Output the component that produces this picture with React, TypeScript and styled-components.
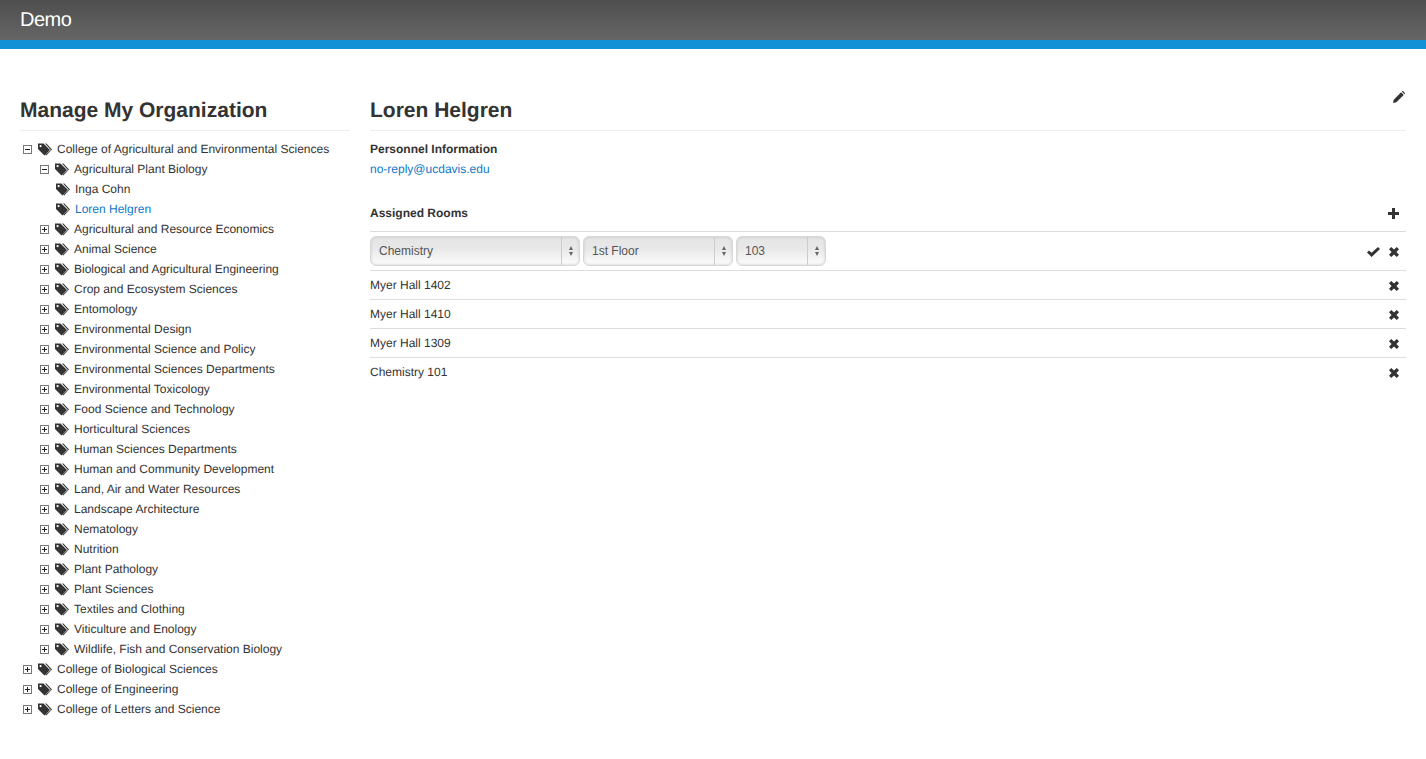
import { createGlobalStyle, styled } from 'styled-components';

const GlobalStyle = createGlobalStyle`
  html, body { margin: 0; padding: 0; background: #fff; }
  body {
    font-family: "Liberation Sans", Arial, sans-serif;
    font-size: 12px;
    color: #333;
    text-rendering: geometricPrecision;
  }
`;

const Header = styled.header`
  height: 40px;
  background: linear-gradient(to bottom, #4e4e4e, #666);
  border-bottom: 9px solid #1291d6;
  display: flex;
  align-items: center;
  padding-left: 20px;
`;

const Brand = styled.div`
  color: #fff;
  font-size: 20px;
  letter-spacing: -0.5px;
`;

const Page = styled.main`
  display: flex;
  gap: 20px;
  padding: 40px 20px 0;
`;

const Sidebar = styled.aside`
  flex: 0 0 330px;
`;

const Content = styled.section`
  flex: 1;
  min-width: 0;
`;

const Title = styled.h2`
  position: relative;
  margin: 0 0 8px;
  height: 41px;
  line-height: 44px;
  font-size: 21px;
  font-weight: bold;
  color: #333;
  border-bottom: 1px solid #eee;
`;

const EditButton = styled.span`
  position: absolute;
  right: 1px;
  top: 2px;
  line-height: 0;
  color: #333;
`;

const TreeList = styled.ul`
  list-style: none;
  margin: 0;
  padding: 0;
`;

const TreeRow = styled.li<{ $depth: number }>`
  height: 20px;
  display: flex;
  align-items: center;
  padding-left: ${(p) => 3 + p.$depth * 17}px;
`;

const Toggle = styled.span`
  position: relative;
  box-sizing: border-box;
  flex: 0 0 9px;
  width: 9px;
  height: 9px;
  margin-right: 6px;
  margin-top: 1px;
  border: 1px solid #777;
  background: #fff;
`;

const ToggleBar = styled.span<{ $vertical?: boolean }>`
  position: absolute;
  background: #222;
  left: ${(p) => (p.$vertical ? '3px' : '1px')};
  top: ${(p) => (p.$vertical ? '1px' : '3px')};
  width: ${(p) => (p.$vertical ? '1px' : '5px')};
  height: ${(p) => (p.$vertical ? '5px' : '1px')};
`;

const TagIcon = styled.svg<{ $leaf?: boolean }>`
  flex: 0 0 14px;
  width: 14px;
  height: 13px;
  color: #333;
  margin-left: ${(p) => (p.$leaf ? '16px' : '0')};
  margin-right: 5px;
`;

const TreeLabel = styled.span<{ $active?: boolean }>`
  color: ${(p) => (p.$active ? '#0f78c8' : '#333')};
`;

const Heading = styled.div`
  font-weight: bold;
  line-height: 20px;
`;

const MailLink = styled.a`
  display: block;
  color: #0f78c8;
  line-height: 20px;
  text-decoration: none;
`;

const RoomsHeader = styled.div`
  display: flex;
  justify-content: space-between;
  align-items: center;
  margin: 24px 0 8px;
  height: 20px;
  font-weight: bold;
`;

const RoomRow = styled.div`
  box-sizing: border-box;
  display: flex;
  align-items: center;
  justify-content: space-between;
  height: 29px;
  border-top: 1px solid #ddd;
  color: #333;
`;

const EditRow = styled(RoomRow)`
  height: 39px;
`;

const SelectGroup = styled.div`
  display: flex;
  gap: 3px;
`;

const SelectWrap = styled.div<{ $width: number }>`
  position: relative;
  width: ${(p) => p.$width}px;
  height: 30px;
`;

const Select = styled.select`
  appearance: none;
  box-sizing: border-box;
  width: 100%;
  height: 100%;
  margin: 0;
  padding: 0 24px 0 8px;
  font-family: inherit;
  font-size: 12px;
  color: #555;
  border: 1px solid #d8d8d8;
  border-radius: 6px;
  background: linear-gradient(to bottom, #e4e4e4, #e9e9e9 45%, #fafafa 92%, #f2f2f2);
  box-shadow: inset 0 0 3px rgba(0, 0, 0, 0.14);
`;

const Arrows = styled.span`
  position: absolute;
  top: 1px;
  right: 0;
  bottom: 1px;
  width: 18px;
  border-left: 1px solid #ccc;
  display: flex;
  flex-direction: column;
  align-items: center;
  justify-content: center;
  gap: 2px;
  pointer-events: none;
`;

const Arrow = styled.span<{ $down?: boolean }>`
  width: 0;
  height: 0;
  border-left: 2.5px solid transparent;
  border-right: 2.5px solid transparent;
  border-${(p) => (p.$down ? 'top' : 'bottom')}: 4px solid #666;
`;

const Actions = styled.div`
  display: flex;
  align-items: center;
  gap: 9px;
  padding-right: 7px;
  color: #333;
  line-height: 0;
`;

const RowActions = styled(Actions)`
  padding-top: 2px;
`;

const departments = [
  'Agricultural and Resource Economics',
  'Animal Science',
  'Biological and Agricultural Engineering',
  'Crop and Ecosystem Sciences',
  'Entomology',
  'Environmental Design',
  'Environmental Science and Policy',
  'Environmental Sciences Departments',
  'Environmental Toxicology',
  'Food Science and Technology',
  'Horticultural Sciences',
  'Human Sciences Departments',
  'Human and Community Development',
  'Land, Air and Water Resources',
  'Landscape Architecture',
  'Nematology',
  'Nutrition',
  'Plant Pathology',
  'Plant Sciences',
  'Textiles and Clothing',
  'Viticulture and Enology',
  'Wildlife, Fish and Conservation Biology',
];

const colleges = ['College of Biological Sciences', 'College of Engineering', 'College of Letters and Science'];
const rooms = ['Myer Hall 1402', 'Myer Hall 1410', 'Myer Hall 1309', 'Chemistry 101'];

function Tags({ leaf }: { leaf?: boolean }) {
  return (
    <TagIcon $leaf={leaf} viewBox="0 0 14 13">
      <path
        fill="currentColor"
        fillRule="evenodd"
        d="M0 0.5h5.5L12 7l-5.5 5.5L0 6zM2.6 2a1.1 1.1 0 1 0 0 2.2a1.1 1.1 0 0 0 0-2.2z"
      />
      <path fill="currentColor" d="M7 0.5h1.4L14 6.6 8.2 12.6l-0.8-0.8L12.9 7z" />
    </TagIcon>
  );
}

function PencilGlyph() {
  return (
    <svg width="12" height="12" viewBox="0 0 13 13">
      <path fill="currentColor" d="M0 13l0.8-3.6L8.8 1.4l2.8 2.8-8 8zM9.6 0.6l0.5-0.5a0.6 0.6 0 0 1 0.8 0l2 2a0.6 0.6 0 0 1 0 0.8l-0.5 0.5z" />
    </svg>
  );
}

function PlusGlyph() {
  return (
    <svg width="11" height="11" viewBox="0 0 11 11">
      <path fill="currentColor" d="M4 0h3v4h4v3H7v4H4V7H0V4h4z" />
    </svg>
  );
}

function CheckGlyph() {
  return (
    <svg width="13" height="10" viewBox="0 0 13 10">
      <path fill="currentColor" d="M0 5.4l2-2 2.6 2.4L11 0l2 2-8.4 8z" />
    </svg>
  );
}

function RemoveGlyph() {
  return (
    <svg width="10" height="10" viewBox="0 0 10 10">
      <path fill="currentColor" d="M2.2 0L5 2.6 7.8 0 10 2.2 7.4 5 10 7.8 7.8 10 5 7.4 2.2 10 0 7.8 2.6 5 0 2.2z" />
    </svg>
  );
}

function Branch({ label, depth, open }: { label: string; depth: number; open?: boolean }) {
  return (
    <TreeRow $depth={depth}>
      <Toggle>
        <ToggleBar />
        {!open && <ToggleBar $vertical />}
      </Toggle>
      <Tags />
      <TreeLabel>{label}</TreeLabel>
    </TreeRow>
  );
}

function Leaf({ label, active }: { label: string; active?: boolean }) {
  return (
    <TreeRow $depth={1}>
      <Tags leaf />
      <TreeLabel $active={active}>{label}</TreeLabel>
    </TreeRow>
  );
}

function RoomSelect({ width, value }: { width: number; value: string }) {
  return (
    <SelectWrap $width={width}>
      <Select defaultValue={value}>
        <option>{value}</option>
      </Select>
      <Arrows>
        <Arrow />
        <Arrow $down />
      </Arrows>
    </SelectWrap>
  );
}

export default function App() {
  return (
    <>
      <GlobalStyle />
      <Header>
        <Brand>Demo</Brand>
      </Header>
      <Page>
        <Sidebar>
          <Title>Manage My Organization</Title>
          <TreeList>
            <Branch label="College of Agricultural and Environmental Sciences" depth={0} open />
            <Branch label="Agricultural Plant Biology" depth={1} open />
            <Leaf label="Inga Cohn" />
            <Leaf label="Loren Helgren" active />
            {departments.map((d) => (
              <Branch key={d} label={d} depth={1} />
            ))}
            {colleges.map((c) => (
              <Branch key={c} label={c} depth={0} />
            ))}
          </TreeList>
        </Sidebar>
        <Content>
          <Title>
            Loren Helgren
            <EditButton><PencilGlyph /></EditButton>
          </Title>
          <Heading>Personnel Information</Heading>
          <MailLink href="#">no-reply@ucdavis.edu</MailLink>
          <RoomsHeader>
            Assigned Rooms
            <Actions><PlusGlyph /></Actions>
          </RoomsHeader>
          <EditRow>
            <SelectGroup>
              <RoomSelect width={210} value="Chemistry" />
              <RoomSelect width={150} value="1st Floor" />
              <RoomSelect width={90} value="103" />
            </SelectGroup>
            <RowActions>
              <CheckGlyph />
              <RemoveGlyph />
            </RowActions>
          </EditRow>
          {rooms.map((r) => (
            <RoomRow key={r}>
              {r}
              <RowActions><RemoveGlyph /></RowActions>
            </RoomRow>
          ))}
        </Content>
      </Page>
    </>
  );
}
